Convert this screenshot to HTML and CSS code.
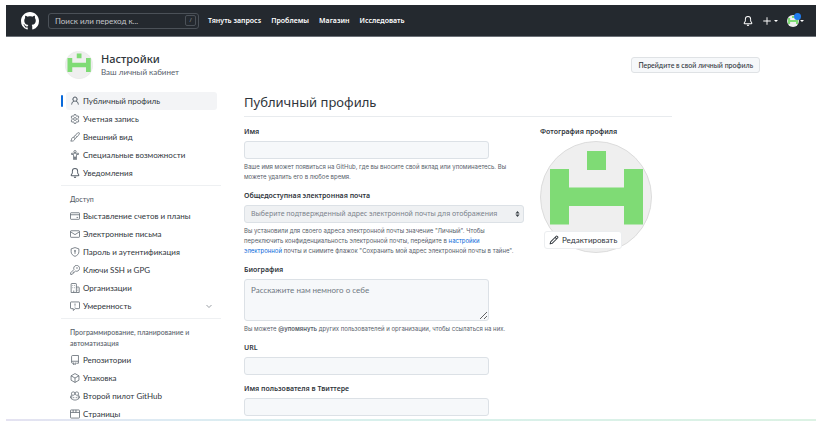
FILE: index.html
```html
<!DOCTYPE html>
<html lang="ru">
<head>
<meta charset="utf-8">
<meta name="viewport" content="width=device-width, initial-scale=1">
<title>Публичный профиль</title>
<link rel="stylesheet" href="styles.css">
</head>
<body>
<svg class="defs" aria-hidden="true">
  <symbol id="bell" viewBox="0 0 16 16"><path d="M8 16a2 2 0 0 0 1.985-1.75c.017-.137-.097-.25-.235-.25h-3.5c-.138 0-.252.113-.235.25A2 2 0 0 0 8 16ZM3 5a5 5 0 0 1 10 0v2.947c0 .05.015.098.042.139l1.703 2.555A1.519 1.519 0 0 1 13.482 13H2.518a1.516 1.516 0 0 1-1.263-2.36l1.703-2.554A.255.255 0 0 0 3 7.947Zm5-3.5A3.5 3.5 0 0 0 4.5 5v2.947c0 .346-.102.683-.294.97l-1.703 2.556a.017.017 0 0 0-.003.01l.001.006.006.01h10.986l.006-.01v-.006l-.003-.01-1.703-2.554a1.745 1.745 0 0 1-.294-.97V5A3.5 3.5 0 0 0 8 1.5Z"/></symbol>
  <symbol id="identicon" viewBox="0 0 112 112"><circle cx="56" cy="56" r="55.5" fill="#efefef" stroke="#dcdcdc"/><path fill="#7fdb75" d="M47 10h19v19H47zM10 28h19v18.500h55V28h19v55.500H84V65H29v18.500H10z"/></symbol>
  <symbol id="pencil" viewBox="0 0 16 16"><path d="M11.013 1.427a1.75 1.75 0 0 1 2.474 0l1.086 1.086a1.75 1.75 0 0 1 0 2.474l-8.610 8.610c-.210.210-.470.364-.756.445l-3.251.930a.750.750 0 0 1-.927-.928l.929-3.250c.081-.286.235-.547.445-.758l8.610-8.610Zm.176 4.823L9.750 4.810l-6.286 6.287a.253.253 0 0 0-.064.108l-.558 1.953 1.953-.558a.253.253 0 0 0 .108-.064Zm1.238-3.763a.250.250 0 0 0-.354 0L10.811 3.750l1.439 1.440 1.263-1.263a.250.250 0 0 0 0-.354Z"/></symbol>
</svg>
<div class="frame">
  <header class="topbar">
    <a class="logo" href="#" aria-label="GitHub"><svg viewBox="0 0 16 16"><path d="M8 0c4.420 0 8 3.580 8 8a8.013 8.013 0 0 1-5.450 7.590c-.400.080-.550-.170-.550-.380 0-.270.010-1.130.010-2.200 0-.750-.250-1.230-.540-1.480 1.780-.200 3.650-.880 3.650-3.950 0-.880-.310-1.590-.820-2.150.080-.200.360-1.020-.080-2.120 0 0-.670-.220-2.200.820-.640-.180-1.320-.270-2-.270-.680 0-1.360.090-2 .270-1.530-1.030-2.200-.820-2.200-.820-.440 1.100-.160 1.920-.080 2.120-.510.560-.820 1.280-.820 2.150 0 3.060 1.860 3.750 3.640 3.950-.230.200-.440.550-.510 1.070-.460.210-1.610.550-2.330-.660-.150-.240-.600-.830-1.230-.820-.670.010-.270.380.010.530.340.190.730.900.820 1.130.160.450.680 1.310 2.690.940 0 .670.010 1.300.010 1.490 0 .210-.150.450-.550.380A7.995 7.995 0 0 1 0 8c0-4.420 3.580-8 8-8Z"/></svg></a>
    <label class="search"><input type="search" aria-label="Поиск" placeholder="Поиск или переход к..."><kbd>/</kbd></label>
    <nav class="topnav" aria-label="Главное меню">
      <a href="#">Тянуть запросs</a><a href="#">Проблемы</a><a href="#">Магазин</a><a href="#">Исследовать</a>
    </nav>
    <div class="tools">
      <button class="tool" aria-label="Уведомления"><svg class="icon"><use href="#bell"/></svg></button>
      <button class="tool" aria-label="Создать"><svg class="icon" viewBox="0 0 16 16"><path d="M7.250 2h1.500v5.250H14v1.500H8.750V14h-1.500V8.750H2v-1.500h5.250z"/></svg><span class="caret"></span></button>
      <button class="tool user" aria-label="Профиль"><svg class="mini"><use href="#identicon"/></svg><span class="dot"></span><span class="caret"></span></button>
    </div>
  </header>

  <div class="page">
    <div class="account">
      <svg class="account-avatar"><use href="#identicon"/></svg>
      <div class="account-text"><h1>Настройки</h1><p>Ваш личный кабинет</p></div>
      <a class="btn" href="#">Перейдите в свой личный профиль</a>
    </div>

    <div class="columns">
      <nav class="side" aria-label="Настройки">
        <ul>
          <li class="current"><a href="#" aria-current="page"><svg class="icon" viewBox="0 0 16 16"><path d="M10.561 8.073a6.005 6.005 0 0 1 3.432 5.142.750.750 0 1 1-1.498.070 4.500 4.500 0 0 0-8.990 0 .750.750 0 0 1-1.498-.070 6.004 6.004 0 0 1 3.431-5.142 3.999 3.999 0 1 1 5.123 0ZM10.500 5a2.500 2.500 0 1 0-5 0 2.500 2.500 0 0 0 5 0Z"/></svg>Публичный профиль</a></li>
          <li><a href="#"><svg class="icon line" viewBox="0 0 16 16"><path d="M6.800.8h2.400l.5 2.100 1.300.7 2-.7 1.300 2-1.500 1.600v3l1.500 1.600-1.300 2-2-.7-1.300.7-.5 2.100H6.800l-.5-2.100-1.300-.7-2 .7-1.300-2 1.500-1.600v-3L1.700 4.900l1.300-2 2 .7 1.300-.7z"/><circle cx="8" cy="8" r="2.300"/></svg>Учетная запись</a></li>
          <li><a href="#"><svg class="icon line" viewBox="0 0 16 16"><path d="M6 8.500C8 5 11 2 14 1c1.500.2 1.300 1.500.8 2.300C13 6.500 10.500 9 7.800 10.600M6 8.500c-2 0-3.300 1-3.500 3-.1 1.500-.5 2.300-1.500 3 3.500.5 6.500-.5 6.800-3.900C7.600 9.500 7 8.800 6 8.500zM8.800 5.500l2 2"/></svg>Внешний вид</a></li>
          <li><a href="#"><svg class="icon line" viewBox="0 0 16 16"><circle cx="8" cy="2.600" r="1.800"/><path d="M2.500 5.200h11v2H10.300v8h-1.500V11H7.200v4.200H5.700v-8H2.500z"/></svg>Специальные возможности</a></li>
          <li><a href="#"><svg class="icon"><use href="#bell"/></svg>Уведомления</a></li>
        </ul>
        <h2>Доступ</h2>
        <ul>
          <li><a href="#"><svg class="icon line" viewBox="0 0 16 16"><rect x=".8" y="2.800" width="14.400" height="10.500" rx="1"/><path d="M1 6h14M10.500 10.300H13"/></svg>Выставление счетов и планы</a></li>
          <li><a href="#"><svg class="icon line" viewBox="0 0 16 16"><rect x=".8" y="2.800" width="14.400" height="10.500" rx="1"/><path d="m1 4.500 7 4.500 7-4.500"/></svg>Электронные письма</a></li>
          <li><a href="#"><svg class="icon line" viewBox="0 0 16 16"><path d="M8 .9 14.200 3v4.500c0 3.600-2.500 6-6.200 7.500-3.700-1.500-6.200-3.900-6.200-7.500V3zM8 7v4"/><circle cx="8" cy="6.200" r="1"/></svg>Пароль и аутентификация</a></li>
          <li><a href="#"><svg class="icon line" viewBox="0 0 16 16"><path d="M6.300 7.200A4.700 4.700 0 1 1 8.900 9.700L7.500 11H6v1.500H4.500V14l-1 1H1v-2.500z"/><circle cx="11.200" cy="4.800" r=".6"/></svg>Ключи SSH и GPG</a></li>
          <li><a href="#"><svg class="icon line" viewBox="0 0 16 16"><path d="M1.800 15.200V1.800q0-1 1-1h6.400q1 0 1 1v13.400zM10.200 6.500h3.500q1 0 1 1v7.700h-4.500M6 15v-3M4 4h1M7 4h1M4 7.500h1M7 7.500h1M12 9.500h1M12 12.200h1"/></svg>Организации</a></li>
          <li><a href="#"><svg class="icon line" viewBox="0 0 16 16"><path d="M1.800 1.500h12.400q1 0 1 1v8.700q0 1-1 1H8.500l-3.300 2.900v-2.900H1.800q-1 0-1-1V2.500q0-1 1-1zM8 4v3.500M8 9v1.500"/></svg>Умеренность<svg class="icon chevron line" viewBox="0 0 16 16"><path d="m3 6 5 5 5-5"/></svg></a></li>
        </ul>
        <h2>Программирование, планирование и автоматизация</h2>
        <ul>
          <li><a href="#"><svg class="icon line" viewBox="0 0 16 16"><path d="M5 13.200H4q-1.500 0-1.500-1.700V2.500q0-1.700 1.700-1.700h9.300v12.400H10M2.700 11q.3-1 1.500-1h9.300M5.500 12v3.500l1.500-1 1.500 1V12"/></svg>Репозитории</a></li>
          <li><a href="#"><svg class="icon line" viewBox="0 0 16 16"><path d="M8 .9 14.300 4.500v7L8 15.100 1.700 11.500v-7zM1.700 4.500 8 8l6.300-3.500M8 8v7"/></svg>Упаковка</a></li>
          <li><a href="#"><svg class="icon line" viewBox="0 0 16 16"><path d="M8 3.200C7.500 1 3 .8 2.500 3c-.3 2 0 3.800 2 3.800S8 6 8 3.200C8.500 1 13 .8 13.500 3c.3 2 0 3.800-2 3.800S8 6 8 3.200M2.500 6.500C1 7.500.8 8.500.8 11c2 2.300 4.500 3.500 7.200 3.500s5.200-1.200 7.200-3.500c0-2.500-.2-3.500-1.700-4.500M2.800 7v5.500M13.200 7v5.500M6 9.500v2M10 9.500v2"/></svg>Второй пилот GitHub</a></li>
          <li><a href="#"><svg class="icon line" viewBox="0 0 16 16"><rect x=".8" y="1.500" width="14.400" height="13" rx="1"/><path d="M1 5.500h14M5 1.500v4M9.500 1.500v4"/></svg>Страницы</a></li>
        </ul>
      </nav>

      <main class="content">
        <h2 class="title">Публичный профиль</h2>
        <div class="profile">
          <form class="form">
            <div class="field">
              <label for="name">Имя</label>
              <input id="name" type="text">
              <p>Ваше имя может появиться на GitHub, где вы вносите свой вклад или упоминаетесь. Вы<br>можете удалить его в любое время.</p>
            </div>
            <div class="field">
              <label for="email">Общедоступная электронная почта</label>
              <div class="select">
                <select id="email"><option>Выберите подтвержденный адрес электронной почты для отображения</option></select>
                <svg viewBox="0 0 8 10"><path d="M4 0 7.500 4h-7zM4 10 .5 6h7z"/></svg>
              </div>
              <p>Вы установили для своего адреса электронной почты значение "Личный". Чтобы<br>переключить конфиденциальность электронной почты, перейдите в <a href="#">настройки<br>электронной</a> почты и снимите флажок "Сохранить мой адрес электронной почты в тайне".</p>
            </div>
            <div class="field">
              <label for="bio">Биография</label>
              <textarea id="bio" placeholder="Расскажите нам немного о себе"></textarea>
              <p>Вы можете <b>@упомянуть</b> других пользователей и организации, чтобы ссылаться на них.</p>
            </div>
            <div class="field">
              <label for="url">URL</label>
              <input id="url" type="url">
            </div>
            <div class="field">
              <label for="twitter">Имя пользователя в Твиттере</label>
              <input id="twitter" type="text">
            </div>
          </form>
          <section class="photo">
            <h3>Фотография профиля</h3>
            <div class="picture">
              <svg><use href="#identicon"/></svg>
              <button class="edit"><svg class="icon"><use href="#pencil"/></svg>Редактировать</button>
            </div>
          </section>
        </div>
      </main>
    </div>
  </div>
  <div class="strip"></div>
</div>
</body>
</html>
```
FILE: styles.css
```css
* { box-sizing: border-box; }
body {
  margin: 0;
  background: #fff;
  color: #2f353b;
  font-family: Lato, "Noto Sans", sans-serif;
  font-size: 8px;
  line-height: 12px;
}
h1, h2, h3, p, ul { margin: 0; padding: 0; }
ul { list-style: none; }
a { color: inherit; text-decoration: none; }
button, input, select, textarea { font: inherit; color: inherit; }
.defs { position: absolute; width: 0; height: 0; }
.icon { width: 10px; height: 10px; fill: currentColor; flex: none; }
.line { fill: none; stroke: currentColor; stroke-width: 1.200; }

.frame {
  display: flex;
  flex-direction: column;
  height: 100vh;
  padding: 5px 10px 4px 6px;
}
.topbar {
  display: flex;
  flex: none;
  align-items: center;
  height: 32px;
  padding: 0 12px 0 15px;
  background: #24292f;
  border-bottom: 1px solid #6b7077;
  color: #fff;
}
.logo { display: flex; }
.logo svg { width: 18px; height: 18px; fill: #fff; }
.search {
  display: flex;
  align-items: center;
  width: 151px;
  height: 16px;
  margin-left: 9px;
  padding: 0 2px 0 6px;
  border: 1px solid #4b5158;
  border-radius: 3px;
}
.search input {
  flex: 1;
  min-width: 0;
  padding: 0;
  border: 0;
  outline: 0;
  background: none;
}
.search input::placeholder { color: #c4c7ca; }
.search kbd {
  width: 11px;
  height: 11px;
  border: 1px solid #4b5158;
  border-radius: 2px;
  color: #8b9096;
  font: 6px/9px "Noto Sans", sans-serif;
  text-align: center;
}
.topnav {
  display: flex;
  gap: 10px;
  margin-left: 9px;
  font-family: "Noto Sans", sans-serif;
  font-size: 7px;
  font-weight: 600;
}
.tools { display: flex; align-items: center; gap: 9px; margin-left: auto; }
.tool {
  position: relative;
  display: flex;
  align-items: center;
  gap: 2px;
  padding: 0;
  border: 0;
  background: none;
}
.caret {
  border: 2px solid transparent;
  border-top-color: currentColor;
  border-bottom: 0;
}
.mini { width: 12px; height: 12px; }
.user { gap: 1px; }
.dot {
  position: absolute;
  top: -2px;
  right: 3px;
  width: 7px;
  height: 7px;
  border-radius: 50%;
  background: #1f7cf0;
}

.page { flex: 1; min-height: 0; overflow: hidden; padding: 14px 56px 0 55px; }
.account { display: flex; align-items: center; gap: 8px; padding-left: 4px; }
.account-avatar { width: 28px; height: 28px; flex: none; }
.account h1 {
  font-family: "Noto Sans", sans-serif;
  font-size: 11px;
  line-height: 14px;
  font-weight: 500;
}
.account p { color: #57606a; }
.btn {
  margin-left: auto;
  padding: 1px 6px;
  border: 1px solid #dfe2e5;
  border-radius: 3px;
  background: #f6f8fa;
  font-size: 7px;
  font-weight: 500;
}

.columns { display: grid; grid-template-columns: 160px minmax(0, 1fr); gap: 23px; padding-top: 13px; }
.side li { position: relative; padding-left: 5px; }
.side li a {
  display: flex;
  align-items: center;
  gap: 3px;
  height: 18px;
  margin-right: 4px;
  padding: 0 4px;
  border-radius: 3px;
}
.side .icon { color: #57606a; }
.side .chevron { width: 8px; height: 8px; margin-left: auto; }
.current a { background: #f3f4f6; }
.current::before {
  content: "";
  position: absolute;
  top: 3px;
  left: 0;
  width: 2px;
  height: 12px;
  border-radius: 1px;
  background: #0969da;
}
.side h2 {
  margin-top: 3px;
  padding: 8px 9px 2px;
  border-top: 1px solid #eef0f2;
  color: #57606a;
  font-size: 7px;
  line-height: 11px;
  font-weight: 500;
}

.content { padding-right: 88px; }
.title {
  padding-bottom: 4px;
  border-bottom: 1px solid #e8ebee;
  font-family: "Noto Sans", sans-serif;
  font-size: 13px;
  line-height: 20px;
  font-weight: 400;
}
.profile { display: flex; gap: 16px; padding-top: 9px; }
.form { flex: none; width: 280px; }
.field { margin-bottom: 8px; }
.field label, .photo h3 {
  display: block;
  margin-bottom: 3px;
  font-family: "Noto Sans", sans-serif;
  font-size: 7px;
  line-height: 12px;
  font-weight: 600;
}
.field input, .field textarea, .field select {
  display: block;
  width: 245px;
  height: 18px;
  padding: 2px 6px;
  border: 1px solid #dce1e6;
  border-radius: 3px;
  outline: 0;
  background: #f6f8fa;
}
.field textarea { height: 42px; padding-top: 4px; }
.field textarea::placeholder { color: #6e7781; }
.select { position: relative; }
.field select {
  width: 100%;
  appearance: none;
  background: #eff1f3;
  color: #7b838c;
  font-family: "Noto Sans", sans-serif;
  font-size: 7px;
}
.select svg { position: absolute; top: 6px; right: 4px; width: 5px; height: 6px; fill: #3b4248; }
.field p {
  margin-top: 3px;
  color: #57606a;
  font-family: Inter, sans-serif;
  font-size: 6px;
  line-height: 10px;
  white-space: nowrap;
}
.field p a { color: #0969da; }
.field p b { font-weight: 600; }
.picture { position: relative; }
.picture > svg { display: block; width: 112px; height: 112px; }
.edit {
  position: absolute;
  bottom: 4px;
  left: 4px;
  display: flex;
  align-items: center;
  gap: 3px;
  height: 18px;
  padding: 0 4px;
  border: 1px solid #eceef0;
  border-radius: 3px;
  background: #fff;
}
.strip {
  flex: none;
  height: 2px;
  background: linear-gradient(90deg, #e4e2f1, #ddebf3 20%, #d8f0ec 45%, #dcf2e4);
}
```
